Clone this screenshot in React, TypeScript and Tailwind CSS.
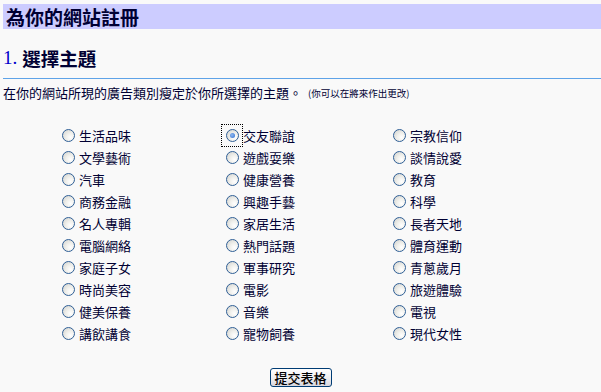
import React from "react";

const cols: string[][] = [
  ["生活品味", "文學藝術", "汽車", "商務金融", "名人專輯", "電腦網絡", "家庭子女", "時尚美容", "健美保養", "講飲講食"],
  ["交友聯誼", "遊戲耍樂", "健康營養", "興趣手藝", "家居生活", "熱門話題", "軍事研究", "電影", "音樂", "寵物飼養"],
  ["宗教信仰", "談情說愛", "教育", "科學", "長者天地", "體育運動", "青蔥歲月", "旅遊體驗", "電視", "現代女性"],
];

function Radio({ checked }: { checked?: boolean }) {
  return (
    <span className="relative inline-flex w-[13px] h-[13px] shrink-0">
      {checked && (
        <span className="absolute -left-[5px] -top-[5px] w-[22px] h-[23px] border border-dotted border-black" />
      )}
      <span className="w-[13px] h-[13px] rounded-full border border-[#2f5f96] bg-[radial-gradient(circle_at_68%_68%,#ffffff_0%,#f0f0ec_40%,#cfd0cc_100%)] flex items-center justify-center">
        {checked && <span className="w-[5px] h-[5px] rounded-full bg-[radial-gradient(circle_at_40%_40%,#8fb8f0_0%,#2f6fd0_100%)]" />}
      </span>
    </span>
  );
}

export default function App() {
  const font = { fontFamily: '"Noto Sans CJK TC", "Noto Sans", sans-serif' };
  return (
    <div className="min-h-[392px] bg-[#f9f9f9] pt-[4px] pl-[3px] text-[#000033]" style={font}>
      <div className="h-[25px] bg-[#ccccff] flex items-center pl-[3px]">
        <h1 className="text-[19px] font-bold leading-none text-[#000033]">為你的網站註冊</h1>
      </div>
      <h2 className="mt-[17px] h-[24px] leading-[24px] text-[18.5px] font-bold flex items-center">
        <span className="text-[#0000cc] font-normal text-[19px]" style={{ fontFamily: '"Liberation Serif", serif' }}>1.</span>
        <span className="ml-[5px]">選擇主題</span>
      </h2>
      <div className="mt-[8px] border-t border-[#5ea3e8]" />
      <p className="mt-[6px] leading-[16px] text-[13px] flex items-center">
        <span>在你的網站所現的廣告類別瘦定於你所選擇的主題。</span>
        <span className="ml-[6px] text-[9.5px]">(你可以在將來作出更改)</span>
      </p>
      <div className="mt-[23px] ml-[59px] flex">
        {cols.map((col, ci) => (
          <div key={ci} className={ci === 0 ? "w-[164px]" : ci === 1 ? "w-[167px]" : "w-[160px]"}>
            {col.map((label, ri) => (
              <div key={ri} className="h-[22px] flex items-center">
                <Radio checked={ci === 1 && ri === 0} />
                <span className="ml-[4px] text-[13px] leading-none">{label}</span>
              </div>
            ))}
          </div>
        ))}
      </div>
      <div className="mt-[24px] flex justify-center pr-[3px]">
        <button className="w-[62px] h-[19px] border border-[#003c74] rounded-[3px] bg-[linear-gradient(#ffffff,#eeeef0_55%,#d6d6de)] text-[13px] font-medium leading-none text-black flex items-center justify-center" style={font}>
          提交表格
        </button>
      </div>
    </div>
  );
}
